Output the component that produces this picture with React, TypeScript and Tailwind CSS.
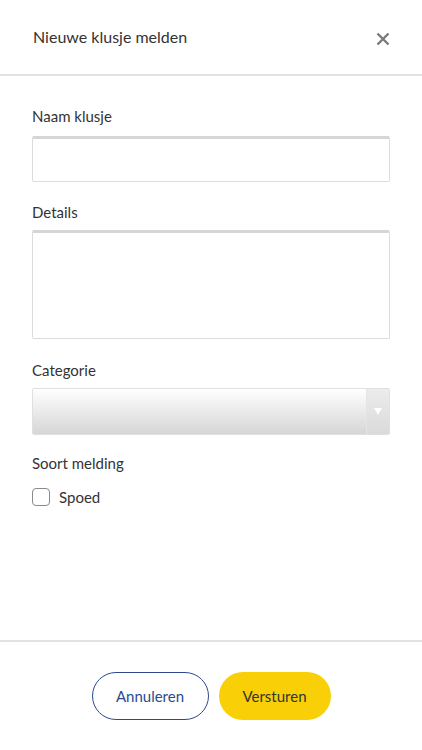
import React from "react";

export default function App() {
  const font = { fontFamily: "Lato, 'Noto Sans', sans-serif" };
  return (
    <div className="w-[422px] h-[750px] bg-white flex flex-col text-[#333]" style={font}>
      <div className="h-[74px] flex items-center justify-between pl-[33px] pr-[32px] border-b-2 border-[#e2e2e2] box-content">
        <div className="text-[16px] text-[#333] -mt-[1px]">Nieuwe klusje melden</div>
        <svg width="14" height="14" viewBox="0 0 14 14" className="mt-[4px]">
          <path d="M1.5 1.5 L12.5 12.5 M12.5 1.5 L1.5 12.5" stroke="#7a7a7a" strokeWidth="2.4" strokeLinecap="butt" />
        </svg>
      </div>
      <div className="flex-1 flex flex-col px-[32px] pt-[30px]">
        <label className="text-[15px] leading-[20px] text-[#333]">Naam klusje</label>
        <div className="mt-[10px] h-[46px] border border-[#dcdcdc] border-t-[3px] border-t-[#d6d6d6] rounded-[2px]" />
        <label className="mt-[20px] text-[15px] leading-[20px] text-[#333]">Details</label>
        <div className="mt-[8px] h-[109px] border border-[#dcdcdc] border-t-[3px] border-t-[#d6d6d6] rounded-[2px]" />
        <label className="mt-[21px] text-[15px] leading-[20px] text-[#333]">Categorie</label>
        <div className="mt-[8px] h-[47px] flex border border-[#e0e0e0] rounded-[2px] bg-gradient-to-b from-[#ffffff] to-[#d6d6d6]">
          <div className="flex-1" />
          <div className="w-[23px] flex items-center justify-center border-l border-[#e4e4e4] bg-gradient-to-b from-[#ececec] to-[#dadada]">
            <svg width="8" height="7" viewBox="0 0 8 7">
              <path d="M0 0 L8 0 L4 7 Z" fill="#ffffff" />
            </svg>
          </div>
        </div>
        <label className="mt-[18px] text-[15px] leading-[20px] text-[#333]">Soort melding</label>
        <div className="mt-[13px] flex items-center gap-[9px]">
          <div className="w-[18px] h-[18px] border border-[#8a8a8a] rounded-[4px] bg-white" />
          <span className="text-[15px] text-[#333]">Spoed</span>
        </div>
      </div>
      <div className="border-t-2 border-[#e2e2e2] h-[110px] flex justify-center pt-[30px] gap-[10px]">
        <button className="w-[117px] h-[48px] rounded-full border-[1.5px] border-[#2c4a8c] text-[#2c4a8c] text-[15px] bg-white" style={font}>
          Annuleren
        </button>
        <button className="w-[112px] h-[48px] rounded-full bg-[#f9cf08] text-[#333] text-[15px]" style={font}>
          Versturen
        </button>
      </div>
    </div>
  );
}
